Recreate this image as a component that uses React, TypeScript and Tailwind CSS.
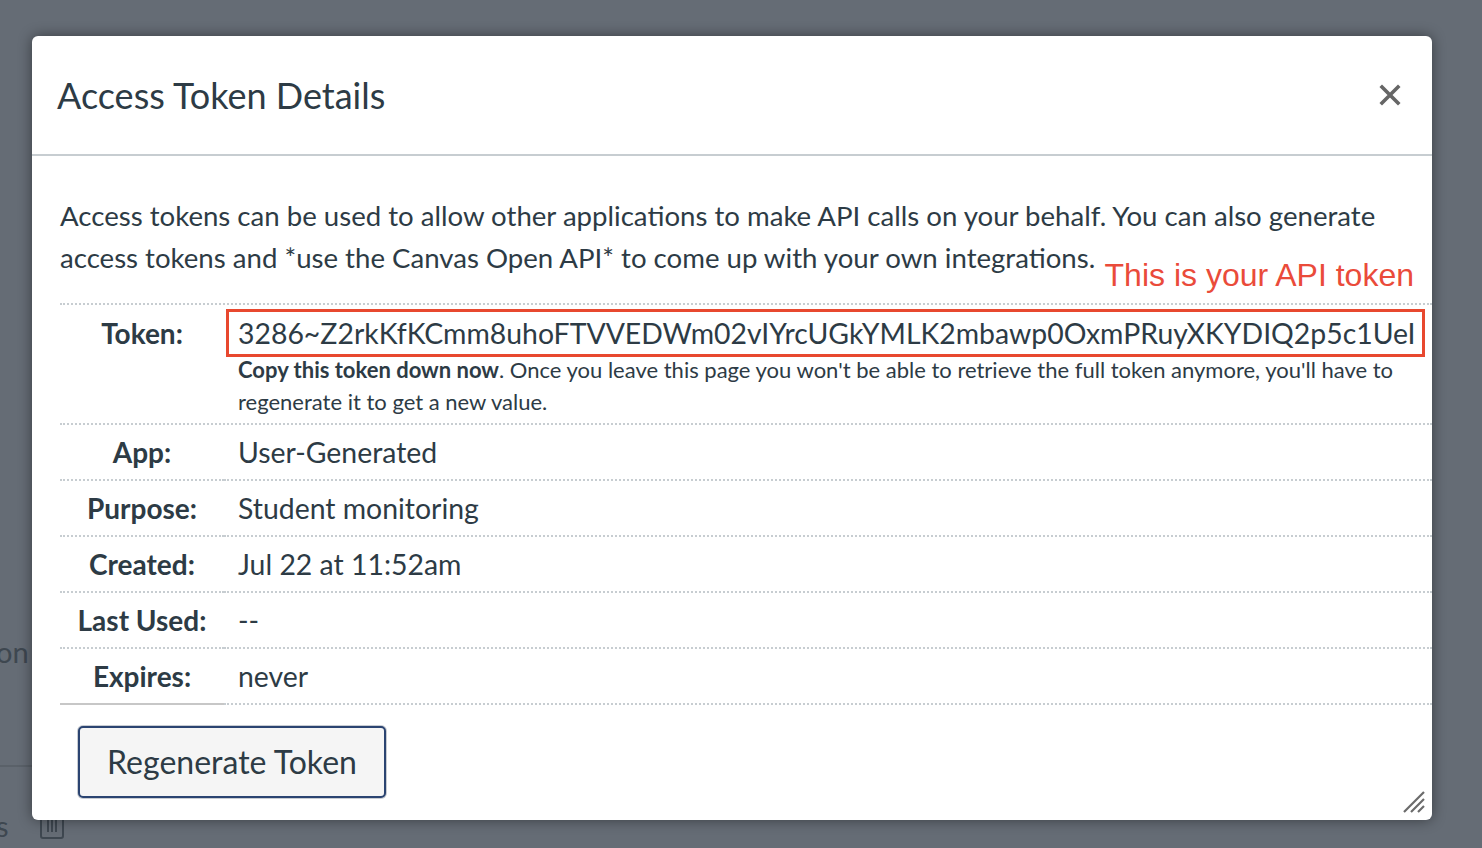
import React from "react";

const rows: { label: string; value: string }[] = [
  { label: "App:", value: "User-Generated" },
  { label: "Purpose:", value: "Student monitoring" },
  { label: "Created:", value: "Jul 22 at 11:52am" },
  { label: "Last Used:", value: "--" },
  { label: "Expires:", value: "never" },
];

export default function App() {
  return (
    <div
      className="relative h-[848px] w-full overflow-hidden bg-[#656c75] text-[#2d3b45]"
      style={{ fontFamily: "Lato, 'Noto Sans', sans-serif" }}
    >
      {/* page behind the overlay */}
      <div className="flex h-full w-[80px] flex-col pt-[630px]">
        <div className="-ml-[4px] text-[29px] leading-[44px] text-[#3e4750]">on</div>
        <div className="mt-[91px] h-[2px] w-[40px] bg-[#5a6169]" />
        <div className="mt-[44px] flex items-center gap-[30px]">
          <span className="-ml-[4px] text-[29px] leading-[30px] text-[#3e4750]">s</span>
          <svg className="shrink-0" width="26" height="28" viewBox="0 0 26 28" fill="none" stroke="#3e4750" strokeWidth="2">
            <rect x="2" y="2" width="22" height="24" rx="2" />
            <path d="M9 6v14M13 6v14M17 6v14" />
          </svg>
        </div>
      </div>

      {/* dialog */}
      <div className="absolute left-[32px] top-[36px] flex h-[784px] w-[1400px] flex-col rounded-[6px] bg-white shadow-[0_0_14px_rgba(0,0,0,0.45)]">
        <div className="flex h-[120px] shrink-0 items-center justify-between border-b-2 border-[#c7cdd1] pl-[25px] pr-[31px]">
          <h1 className="text-[36px] font-normal leading-[44px] text-[#2d3b45]">Access Token Details</h1>
          <svg width="22" height="22" viewBox="0 0 22 22" stroke="#666666" strokeWidth="3.6" strokeLinecap="square">
            <path d="M3 3l16 16M19 3L3 19" />
          </svg>
        </div>

        <div className="relative flex flex-1 flex-col pl-[28px] pt-[39px]">
          <p className="pr-[40px] text-[27.6px] leading-[42px]">
            Access tokens can be used to allow other applications to make API calls on your behalf. You can also generate
            access tokens and *use the Canvas Open API* to come up with your own integrations.
          </p>
          <div
            className="absolute right-[18px] top-[100px] text-[32px] leading-[38px] text-[#ea4b3a]"
            style={{ fontFamily: "'Liberation Sans', Arial, sans-serif" }}
          >
            This is your API token
          </div>

          <div className="mt-[24px] border-t-2 border-dotted border-[#c7cdd1]">
            <div className="flex border-b-2 border-dotted border-[#c7cdd1]">
              <div className="w-[164px] shrink-0 pt-[7px] text-center text-[28px] font-bold leading-[42px]">Token:</div>
              <div className="flex-1 pl-[14px] pb-[5px] pt-[7px]">
                <div className="relative whitespace-nowrap text-[28.4px] leading-[42px]">
                  3286~Z2rkKfKCmm8uhoFTVVEDWm02vIYrcUGkYMLK2mbawp0OxmPRuyXKYDIQ2p5c1UeI
                  <div className="pointer-events-none absolute -left-[12px] right-[7px] top-[-3px] bottom-[-3px] border-[3px] border-[#e8482f]" />
                </div>
                <div className="pr-[30px] text-[22px] leading-[32px]">
                  <strong className="font-bold">Copy this token down now</strong>. Once you leave this page you won't be able to
                  retrieve the full token anymore, you'll have to regenerate it to get a new value.
                </div>
              </div>
            </div>
            {rows.map((r, i) => (
              <div key={r.label} className="flex">
                <div
                  className={
                    i === rows.length - 1
                      ? "w-[164px] shrink-0 border-b-2 border-solid border-[#c7c7c7] py-[6px] text-center text-[28px] font-bold leading-[42px]"
                      : "w-[164px] shrink-0 border-b-2 border-dotted border-[#c7cdd1] py-[6px] text-center text-[28px] font-bold leading-[42px]"
                  }
                >
                  {r.label}
                </div>
                <div className="flex-1 border-b-2 border-dotted border-[#c7cdd1] py-[6px] pl-[14px] text-[28.4px] leading-[42px]">
                  {r.value}
                </div>
              </div>
            ))}
          </div>

          <div className="pl-[18px] pt-[21px]">
            <button className="h-[72px] w-[308px] rounded-[5px] border-2 border-[#2b4471] bg-[#f5f5f5] text-[32px] leading-[40px] text-[#2d3b45] shadow-[0_0_0_1px_#c8ccd2]">
              Regenerate Token
            </button>
          </div>

          <svg
            className="absolute bottom-[6px] right-[6px]"
            width="24"
            height="24"
            viewBox="0 0 24 24"
            stroke="#6b6b6b"
            strokeWidth="2.2"
          >
            <path d="M2 22L22 2M9 22L22 9M16 22L22 16" />
          </svg>
        </div>
      </div>
    </div>
  );
}
